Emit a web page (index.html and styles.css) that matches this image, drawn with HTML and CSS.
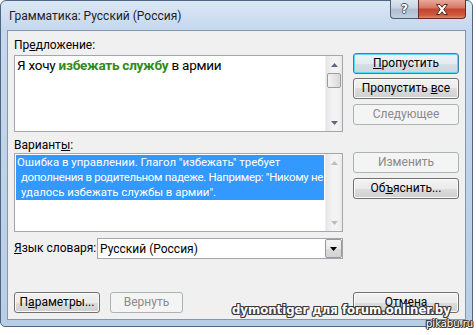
FILE: index.html
```html
<!DOCTYPE html>
<html lang="ru">
<head>
<meta charset="utf-8">
<title>Грамматика</title>
<link rel="stylesheet" href="styles.css">
</head>
<body>
<div class="screen">
  <div class="window">
    <div class="titlebar">
      <span class="title">Грамматика: Русский (Россия)</span>
      <div class="caption">
        <div class="cap help"><span>?</span></div>
        <div class="cap close">
          <svg width="14" height="11" viewBox="0 0 14 11"><path d="M1.5 0.5 L5 0.5 L7 3.2 L9 0.5 L12.5 0.5 L8.8 5.5 L12.5 10.5 L9 10.5 L7 7.8 L5 10.5 L1.5 10.5 L5.2 5.5 Z" fill="#fff" stroke="#5a2a22" stroke-width="1"/></svg>
        </div>
      </div>
    </div>
    <div class="client">
      <div class="top">
        <div class="left">
          <div class="label">Пр<u>е</u>дложение:</div>
          <div class="box sentence">
            <div class="sentence-text">Я хочу <b class="err">избежать службу</b> в армии</div>
            <div class="vscroll">
              <div class="arrow"><svg width="7" height="4" viewBox="0 0 7 4"><path d="M0 4 L3.5 0 L7 4 Z" fill="#5b6a80"/></svg></div>
              <div class="thumb"></div>
              <div class="track"></div>
              <div class="arrow"><svg width="7" height="4" viewBox="0 0 7 4"><path d="M0 0 L3.5 4 L7 0 Z" fill="#5b6a80"/></svg></div>
            </div>
          </div>
          <div class="label variants">Вариант<u>ы</u>:</div>
          <div class="box list">
            <div class="items">
              <div class="sel">
                <div class="line first">Ошибка в управлении. Глагол "избежать" требует</div>
                <div class="line tight">дополнения в родительном падеже. Например: "Никому не</div>
                <div class="line">удалось избежать службы в армии".</div>
              </div>
            </div>
            <div class="vscroll off">
              <div class="arrow"><svg width="7" height="4" viewBox="0 0 7 4"><path d="M0 4 L3.5 0 L7 4 Z" fill="#bcbcbc"/></svg></div>
              <div class="track"></div>
              <div class="arrow"><svg width="7" height="4" viewBox="0 0 7 4"><path d="M0 0 L3.5 4 L7 0 Z" fill="#bcbcbc"/></svg></div>
            </div>
          </div>
          <div class="langrow">
            <span class="label lang-label"><u>Я</u>зык словаря:</span>
            <div class="combo">
              <span class="combo-text">Русский (Россия)</span>
              <div class="drop"><svg width="7" height="4" viewBox="0 0 7 4"><path d="M0 0 L3.5 4 L7 0 Z" fill="#000"/></svg></div>
            </div>
          </div>
        </div>
        <div class="right">
          <div class="btn default"><u>П</u>ропустить</div>
          <div class="btn gap4">Пропустить <u>в</u>се</div>
          <div class="btn disabled gap5">Следующее</div>
          <div class="btn disabled gap27">Изменить</div>
          <div class="btn gap5">Об<u>ъ</u>яснить...</div>
        </div>
      </div>
      <div class="bottom">
        <div class="btn params">П<u>а</u>раметры...</div>
        <div class="btn disabled revert">Вернуть</div>
        <div class="btn cancel">Отмена</div>
      </div>
    </div>
  </div>
  <div class="watermark">dymontiger для forum.onliner.by</div>
  <div class="pikabu">pikabu.ru</div>
</div>
</body>
</html>
```
FILE: styles.css
```css
* { box-sizing: border-box; }
body {
  margin: 0;
  background: #fff;
  font-family: Roboto, "Noto Sans", sans-serif;
  font-size: 12px;
  color: #000;
}
u { text-decoration: underline; text-underline-offset: 1px; }
.screen { position: relative; width: 476px; height: 335px; }
.window {
  width: 473px;
  height: 327px;
  border: 1px solid #4d6684;
  border-radius: 6px 6px 5px 5px;
  background: linear-gradient(#dbe7f5, #c6d8ed 28px, #bdd1e8 60%, #b9cde5);
  padding: 0 6px 6px 6px;
  display: flex;
  flex-direction: column;
}
.titlebar {
  height: 29px;
  display: flex;
  align-items: center;
}
.title { padding-left: 2px; color: #1e1e1e; line-height: 16px; }
.caption {
  margin-left: auto;
  align-self: flex-start;
  margin-top: -1px;
  display: flex;
}
.cap {
  height: 19px;
  border: 1px solid #4e5e74;
  border-top: none;
  display: flex;
  align-items: center;
  justify-content: center;
}
.help {
  width: 28px;
  border-radius: 0 0 0 4px;
  border-right: none;
  background: linear-gradient(#dde6f0, #c7d3e1 45%, #aebdcf 50%, #c1cfdf);
}
.help span {
  color: #fff;
  font-family: "DejaVu Sans", sans-serif;
  font-weight: bold;
  font-size: 12px;
  line-height: 14px;
  text-shadow: -1px 0 #46556a, 1px 0 #46556a, 0 -1px #46556a, 0 1px #46556a;
}
.close {
  width: 48px;
  border-color: #6b2b20;
  border-radius: 0 0 4px 0;
  background: linear-gradient(#e9a99b, #d47561 45%, #c2432c 50%, #d05a3f 85%, #e08a6c);
}
.client {
  flex: 1;
  background: #f0f0f0;
  border: 1px solid #8597ad;
  padding: 6px 6px 6px 6px;
  display: flex;
  flex-direction: column;
}
.top { display: flex; gap: 10px; }
.left { width: 329px; display: flex; flex-direction: column; }
.label { height: 16px; line-height: 16px; white-space: nowrap; }
.label:first-child { margin-bottom: 2px; }
.box {
  background: #fff;
  border: 1px solid #a3a6ad;
  display: flex;
  overflow: hidden;
}
.sentence { height: 77px; }
.sentence-text {
  flex: 1;
  min-width: 0;
  font-size: 13.5px;
  letter-spacing: -0.25px;
  line-height: 18px;
  padding: 0 0 0 2px;
  white-space: nowrap;
}
.err { color: #2f8a22; }
.vscroll {
  width: 17px;
  flex: none;
  display: flex;
  flex-direction: column;
  background: linear-gradient(90deg, #e6e6e6, #f3f3f3 40%, #f3f3f3 70%, #eaeaea);
  border-left: 1px solid #ededed;
}
.arrow { height: 17px; display: flex; align-items: center; justify-content: center; }
.thumb {
  height: 15px;
  margin: 0 1px;
  border: 1px solid #9c9c9c;
  border-radius: 2px;
  background: linear-gradient(90deg, #f4f4f4, #e6e6e6 50%, #d9d9d9);
}
.track { flex: 1; }
.variants { margin-top: 5px; }
.list { height: 79px; }
.items { flex: 1; min-width: 0; padding: 1px; overflow: hidden; }
.sel { background: #3399ff; color: #fff; height: 45px; }
.line { font-size: 11.4px; line-height: 15px; padding-left: 5px; white-space: nowrap; }
.line.first { padding-left: 1px; }
.line.tight { letter-spacing: -0.3px; }
.langrow { margin-top: 6px; display: flex; height: 21px; align-items: center; }
.lang-label { width: 83px; }
.combo {
  width: 246px;
  height: 21px;
  background: #fff;
  border: 1px solid #a3a6ad;
  display: flex;
  align-items: center;
}
.combo-text { flex: 1; padding-left: 2px; line-height: 16px; }
.drop {
  width: 17px;
  height: 19px;
  border: 1px solid #9a9a9a;
  border-radius: 2px;
  background: linear-gradient(#f4f4f4, #e9e9e9 50%, #dcdcdc 50%, #d3d3d3);
  display: flex;
  align-items: center;
  justify-content: center;
}
.right { width: 106px; display: flex; flex-direction: column; padding-top: 16px; }
.btn {
  height: 21px;
  border: 1px solid #707070;
  border-radius: 3px;
  background: linear-gradient(#f2f2f2 0%, #ebebeb 50%, #dddddd 50%, #cfcfcf 100%);
  box-shadow: inset 0 0 0 1px #fbfbfb;
  text-align: center;
  line-height: 19px;
  white-space: nowrap;
}
.btn.default {
  border-color: #3c7fb1;
  box-shadow: inset 0 0 0 1px #5fd6f5;
  background: linear-gradient(#eef4f8 0%, #e4ecf1 50%, #d6e0e6 50%, #cad6dd 100%);
}
.btn.disabled {
  border-color: #adb2b5;
  background: #f4f4f4;
  box-shadow: none;
  color: #8a8a8a;
}
.gap4 { margin-top: 4px; }
.gap5 { margin-top: 5px; }
.gap27 { margin-top: 27px; }
.bottom { margin-top: auto; display: flex; }
.params { width: 86px; }
.revert { width: 73px; margin-left: 10px; }
.cancel { width: 106px; margin-left: auto; }
.watermark {
  position: absolute;
  left: 232px;
  top: 301px;
  font-family: "DejaVu Sans Condensed", "DejaVu Sans", sans-serif;
  font-weight: bold;
  font-size: 13px;
  line-height: 18px;
  color: #fff;
  white-space: nowrap;
  text-shadow: -1px 0 #3b3b3b, 1px 0 #3b3b3b, 0 -1px #3b3b3b, 0 1px #3b3b3b, 1px 1px #3b3b3b, -1px -1px #3b3b3b, 1px -1px #3b3b3b, -1px 1px #3b3b3b;
}
.pikabu {
  position: absolute;
  left: 426px;
  top: 318px;
  font-family: "DejaVu Sans", sans-serif;
  font-size: 10px;
  line-height: 12px;
  color: #fff;
  white-space: nowrap;
  text-shadow: -1px 0 #333, 1px 0 #333, 0 -1px #333, 0 1px #333, 1px 1px #333, -1px -1px #333;
}
```
